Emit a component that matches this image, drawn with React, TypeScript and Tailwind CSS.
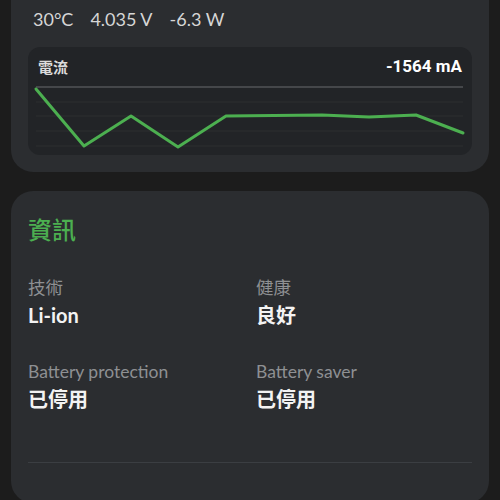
const points: [number, number][] = [
  [37, 89],
  [85, 146],
  [132, 116],
  [179, 147],
  [227, 116],
  [323, 115],
  [370, 117],
  [417, 115],
  [464, 133],
];

const gridLines = [87, 102, 116, 131, 146];

const info = [
  { label: "技術", value: "Li-ion" },
  { label: "健康", value: "良好" },
  { label: "Battery protection", value: "已停用" },
  { label: "Battery saver", value: "已停用" },
];

const CurrentChart = () => {
  const ox = 33;
  const oy = 80;
  return (
    <svg width="436" height="76" viewBox="0 0 436 76" className="block">
      {gridLines.map((y, i) => (
        <line
          key={y}
          x1={37 - ox}
          x2={464 - ox}
          y1={y - oy}
          y2={y - oy}
          stroke={i === 0 ? "#45474a" : "#2c2e31"}
          strokeWidth={i === 0 ? 2 : 1}
        />
      ))}
      <polyline
        points={points.map(([x, y]) => `${x - ox},${y - oy}`).join(" ")}
        fill="none"
        stroke="#4caf50"
        strokeWidth="3"
        strokeLinejoin="round"
        strokeLinecap="round"
      />
    </svg>
  );
};

export default function App() {
  return (
    <div className="h-[500px] overflow-hidden bg-[#1c1c1c] px-[11px] font-[Lato,'Noto_Sans_CJK_TC',sans-serif]">
      <section className="rounded-b-[22px] bg-[#2b2d30] px-[17px] pt-[7px] pb-[17px]">
        <div className="flex h-6 items-center gap-[17px] pl-[5px] text-[18px] leading-6 text-[#d6d6d6]">
          <span>30°C</span>
          <span>4.035 V</span>
          <span>-6.3 W</span>
        </div>
        <div className="mt-[16px] h-[108px] rounded-[12px] bg-[#222427] px-[4px] pt-[10px]">
          <div className="flex h-5 items-center justify-between px-[6px]">
            <span className="text-[15px] font-bold text-[#dcdcdc]">電流</span>
            <span className="font-['Roboto',sans-serif] text-[17px] font-bold text-white">-1564 mA</span>
          </div>
          <div className="mt-[3px]">
            <CurrentChart />
          </div>
        </div>
      </section>

      <section className="mt-[19px] rounded-[22px] bg-[#2b2d30] px-[17px] pt-[23px] pb-10">
        <h2 className="text-[24px] leading-8 font-medium text-[#4caf50]">資訊</h2>
        <div className="mt-[31px] grid grid-cols-2 gap-x-[12px] gap-y-[33px]">
          {info.map(({ label, value }) => (
            <div key={label}>
              <div className="text-[17.5px] leading-[22px] text-[#8e9093]">{label}</div>
              <div className="mt-[3px] text-[20px] leading-[26px] font-bold text-[#f3f3f3]">{value}</div>
            </div>
          ))}
        </div>
        <div className="mt-[50px] h-px bg-[#3b3e42]" />
      </section>
    </div>
  );
}
